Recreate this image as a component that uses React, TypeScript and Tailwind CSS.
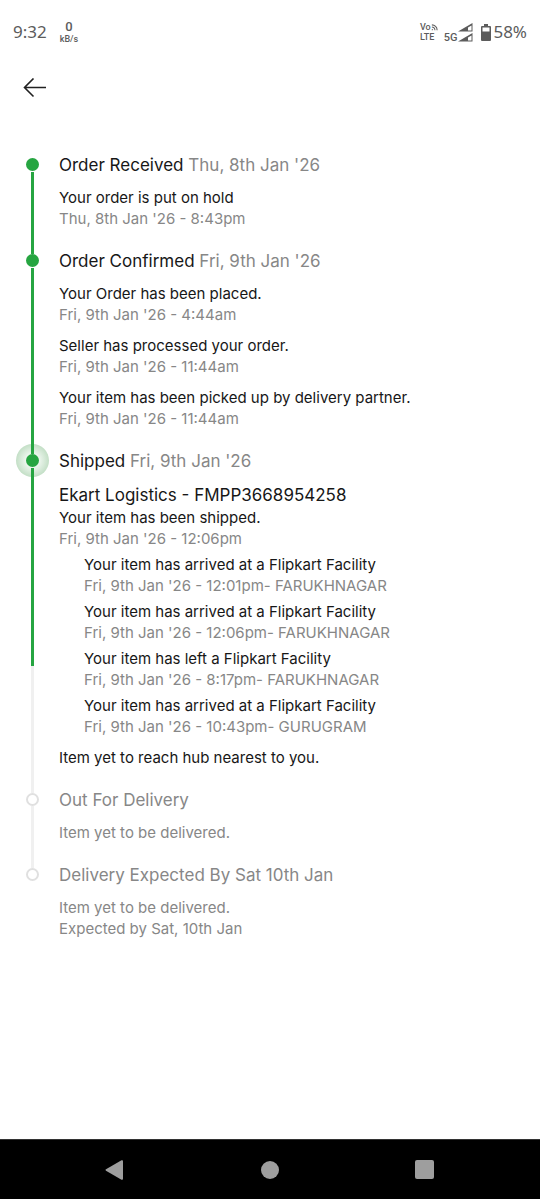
import { Fragment } from "react";
import clsx from "clsx";

type Entry = {
  text: string;
  time?: string;
  title?: string;
  stops?: { text: string; time: string }[];
};

type Step = {
  title: string;
  date?: string;
  state: "done" | "current" | "pending";
  entries: Entry[];
};

const steps: Step[] = [
  {
    title: "Order Received",
    date: "Thu, 8th Jan '26",
    state: "done",
    entries: [{ text: "Your order is put on hold", time: "Thu, 8th Jan '26 - 8:43pm" }],
  },
  {
    title: "Order Confirmed",
    date: "Fri, 9th Jan '26",
    state: "done",
    entries: [
      { text: "Your Order has been placed.", time: "Fri, 9th Jan '26 - 4:44am" },
      { text: "Seller has processed your order.", time: "Fri, 9th Jan '26 - 11:44am" },
      {
        text: "Your item has been picked up by delivery partner.",
        time: "Fri, 9th Jan '26 - 11:44am",
      },
    ],
  },
  {
    title: "Shipped",
    date: "Fri, 9th Jan '26",
    state: "current",
    entries: [
      {
        title: "Ekart Logistics - FMPP3668954258",
        text: "Your item has been shipped.",
        time: "Fri, 9th Jan '26 - 12:06pm",
        stops: [
          {
            text: "Your item has arrived at a Flipkart Facility",
            time: "Fri, 9th Jan '26 - 12:01pm- FARUKHNAGAR",
          },
          {
            text: "Your item has arrived at a Flipkart Facility",
            time: "Fri, 9th Jan '26 - 12:06pm- FARUKHNAGAR",
          },
          {
            text: "Your item has left a Flipkart Facility",
            time: "Fri, 9th Jan '26 - 8:17pm- FARUKHNAGAR",
          },
          {
            text: "Your item has arrived at a Flipkart Facility",
            time: "Fri, 9th Jan '26 - 10:43pm- GURUGRAM",
          },
        ],
      },
      { text: "Item yet to reach hub nearest to you." },
    ],
  },
  {
    title: "Out For Delivery",
    state: "pending",
    entries: [{ text: "Item yet to be delivered." }],
  },
  {
    title: "Delivery Expected By Sat 10th Jan",
    state: "pending",
    entries: [{ text: "Item yet to be delivered.", time: "Expected by Sat, 10th Jan" }],
  },
];

function StatusBar() {
  return (
    <div className="flex h-16 items-center justify-between px-[13px] font-['Noto_Sans',sans-serif] text-[17px] text-[#5c5c5c]">
      <div className="flex items-center gap-[13px]">
        <span>9:32</span>
        <div className="flex flex-col items-center font-['Roboto',sans-serif] font-medium">
          <span className="text-[13px] leading-[14px]">0</span>
          <span className="text-[9px] leading-[10px]">kB/s</span>
        </div>
      </div>
      <div className="flex items-center">
        <div className="mr-[6px] flex flex-col font-['Roboto',sans-serif] text-[9px] leading-[10px] font-medium">
          <span className="flex items-center">
            Vo
            <svg viewBox="0 0 8 8" className="size-[7px]" fill="none" stroke="currentColor" strokeWidth="1.2">
              <path d="M1 1a6 6 0 0 1 6 6M1 3.5A3.5 3.5 0 0 1 4.5 7" />
              <circle cx="1.5" cy="6.5" r="0.7" fill="currentColor" stroke="none" />
            </svg>
          </span>
          <span>LTE</span>
        </div>
        <span className="self-end font-['Roboto',sans-serif] text-[11px] leading-[14px] font-medium">5G</span>
        <svg viewBox="0 0 15 19" className="mr-2 ml-px h-[19px] w-[15px]" fill="currentColor">
          <path d="M0 8.5 14.5 0v8.5ZM10 4.5v3h3.500V2.500Z" fillRule="evenodd" />
          <path d="M0 18.5 14.5 10v8.5ZM10 14.5v3h3.500V12.500Z" fillRule="evenodd" />
        </svg>
        <svg viewBox="0 0 10 17" className="mr-[2px] h-[17px] w-[10px]" fill="currentColor">
          <path d="M3 0h4v2h2a1 1 0 0 1 1 1v13a1 1 0 0 1-1 1H1a1 1 0 0 1-1-1V3a1 1 0 0 1 1-1h2ZM1.500 3.500v4h7v-4Z" fillRule="evenodd" />
        </svg>
        <span>58%</span>
      </div>
    </div>
  );
}

function Rail({ step, index }: { step: Step; index: number }) {
  const last = index === steps.length - 1;
  const pending = step.state === "pending";

  return (
    <div className="flex w-[13px] flex-col items-center">
      <div
        className={clsx(
          "h-[5px] w-[3px]",
          index > 0 && (pending ? "bg-[#f0f0f0]" : "relative z-10 bg-[#26a541]")
        )}
      />
      <div className="relative flex size-[13px] items-center justify-center">
        {step.state === "current" && (
          <div className="absolute -inset-[10px] rounded-full bg-[radial-gradient(circle_closest-side,#edf6ee_40%,#c3dfc6_100%)]" />
        )}
        <div
          className={clsx(
            "relative size-[13px] rounded-full",
            pending ? "border-2 border-[#e0e0e0] bg-white" : "bg-[#26a541]"
          )}
        />
      </div>
      {!last && (
        <div
          className={clsx(
            "relative z-10 flex w-[3px] flex-1 flex-col bg-[#f0f0f0]",
            !pending && "mt-px"
          )}
        >
          {step.state === "done" && <div className="flex-1 bg-[#26a541]" />}
          {step.state === "current" && <div className="h-[62%] bg-[#26a541]" />}
        </div>
      )}
    </div>
  );
}

function StepRow({ step, index }: { step: Step; index: number }) {
  const pending = step.state === "pending";

  return (
    <li className={clsx("flex gap-5", pending ? "text-[#878787]" : "text-[#171717]")}>
      <Rail step={step} index={index} />
      <div className="flex-1 pb-5">
        <h2 className="text-[17px] leading-6">
          {step.title} {step.date && <span className="text-[#878787]">{step.date}</span>}
        </h2>
        <div className="mt-[10px] flex flex-col gap-[10px] text-[15px] leading-[21px]">
          {step.entries.map((entry) => (
            <div key={entry.text}>
              {entry.title && <h3 className="text-[17px] leading-6">{entry.title}</h3>}
              <p>{entry.text}</p>
              {entry.time && <p className="text-[#878787]">{entry.time}</p>}
              {entry.stops && (
                <div className="pl-[25px]">
                  {entry.stops.map((stop) => (
                    <Fragment key={stop.time}>
                      <p className="mt-[5px]">{stop.text}</p>
                      <p className="text-[#878787]">{stop.time}</p>
                    </Fragment>
                  ))}
                </div>
              )}
            </div>
          ))}
        </div>
      </div>
    </li>
  );
}

export default function App() {
  return (
    <div className="flex min-h-screen flex-col bg-white font-['Inter',sans-serif]">
      <StatusBar />
      <header className="flex h-12 items-center px-[23px]">
        <button type="button" aria-label="Back" className="text-[#212121]">
          <svg viewBox="0 0 24 20" className="h-5 w-6" fill="none" stroke="currentColor" strokeWidth="1.6">
            <path d="M23 9.500H1.500M10.500 .500 1.500 9.500l9 9" />
          </svg>
        </button>
      </header>
      <main className="flex-1 px-[26px] pt-[41px]">
        <ol>
          {steps.map((step, i) => (
            <StepRow key={step.title} step={step} index={i} />
          ))}
        </ol>
      </main>
      <nav className="grid h-[60px] grid-cols-3 border-t border-[#333] bg-black px-[38px] text-[#9e9e9e]">
        <button type="button" aria-label="Back" className="flex items-center justify-center">
          <svg viewBox="0 0 20 20" className="size-5" fill="currentColor">
            <path d="M1 9.300 16.500 .300q1.500-.600 1.500 1v17.400q0 1.600-1.500 1L1 10.700q-1-.700 0-1.400Z" />
          </svg>
        </button>
        <button type="button" aria-label="Home" className="flex items-center justify-center">
          <span className="size-[18px] rounded-full bg-[#9e9e9e]" />
        </button>
        <button type="button" aria-label="Recent apps" className="flex items-center justify-center">
          <span className="size-[19px] rounded-[2px] bg-[#9e9e9e]" />
        </button>
      </nav>
    </div>
  );
}
